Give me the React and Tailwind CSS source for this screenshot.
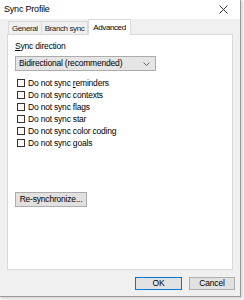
import React from 'react';

const font = { fontFamily: '"Liberation Sans", Arial, sans-serif' };

const options = [
  'reminders',
  'contexts',
  'flags',
  'star',
  'color coding',
  'goals',
];

function Tab({ label, active }) {
  if (active) {
    return (
      <div className="relative z-10 -mb-px flex h-[16px] items-center border border-b-0 border-[#d9d9d9] bg-white px-[4px] text-black">
        {label}
      </div>
    );
  }
  return (
    <div className="-ml-px flex h-[13px] items-center border border-b-0 border-[#d9d9d9] bg-[#f0f0f0] px-[3px] text-[#222] first:ml-0">
      {label}
    </div>
  );
}

function Check({ label }) {
  return (
    <label className="flex h-[12px] items-center gap-[3px] text-black">
      <span className="h-[8px] w-[8px] shrink-0 border border-[#333] bg-white" />
      <span className="whitespace-nowrap">
        Do not sync{' '}
        {label === 'reminders' ? (
          <>
            <span className="underline">r</span>eminders
          </>
        ) : (
          label
        )}
      </span>
    </label>
  );
}

export default function App() {
  return (
    <div
      className="h-[300px] w-[244px] bg-[#f7f7f7] text-[8.5px] leading-[11px] tracking-[-0.2px]"
      style={font}
    >
      <div className="flex h-[297px] w-[241px] flex-col border-r border-b border-[#9a9a9a] bg-[#f0f0f0] shadow-[1px_1px_3px_rgba(0,0,0,0.2)]">
        <div className="flex h-[19px] items-center justify-between bg-white pl-[4px] pr-[12px]">
          <span className="text-[9px] text-black">Sync Profile</span>
          <svg width="9" height="9" viewBox="0 0 9 9">
            <path d="M0.5 0.5 L8.5 8.5 M8.5 0.5 L0.5 8.5" stroke="#333" strokeWidth="1" />
          </svg>
        </div>

        <div className="flex items-end pl-[8px] text-[8px] tracking-[-0.4px]">
          <Tab label="General" />
          <Tab label="Branch sync" />
          <Tab label="Advanced" active />
        </div>

        <div className="mx-[7px] flex h-[236px] flex-col border border-[#d9d9d9] bg-white px-[7px] pt-[6px]">
          <div className="text-black">
            <span className="underline">S</span>ync direction
          </div>
          <div className="mt-[4px] flex h-[15px] w-[141px] items-center justify-between border border-[#acacac] bg-[#e5e5e5] pl-[3px] pr-[5px] text-black">
            <span>Bidirectional (recommended)</span>
            <svg width="7" height="4" viewBox="0 0 7 4">
              <path d="M0.5 0.5 L3.5 3.5 L6.5 0.5" fill="none" stroke="#666" strokeWidth="1" />
            </svg>
          </div>
          <div className="mt-[6px] flex flex-col pl-[2px]">
            {options.map((o) => (
              <Check key={o} label={o} />
            ))}
          </div>
          <button className="mt-[43px] flex h-[15px] w-[72px] items-center justify-center whitespace-nowrap border border-[#adadad] bg-[#e1e1e1] text-black">
            Re-synchronize...
          </button>
        </div>

        <div className="flex justify-end gap-[7px] pr-[5px] pt-[7px]">
          <button className="flex h-[13px] w-[47px] items-center justify-center border border-[#0078d7] bg-[#e1e1e1] text-black">
            OK
          </button>
          <button className="flex h-[13px] w-[46px] items-center justify-center border border-[#adadad] bg-[#e1e1e1] text-black">
            Cancel
          </button>
        </div>
      </div>
    </div>
  );
}
